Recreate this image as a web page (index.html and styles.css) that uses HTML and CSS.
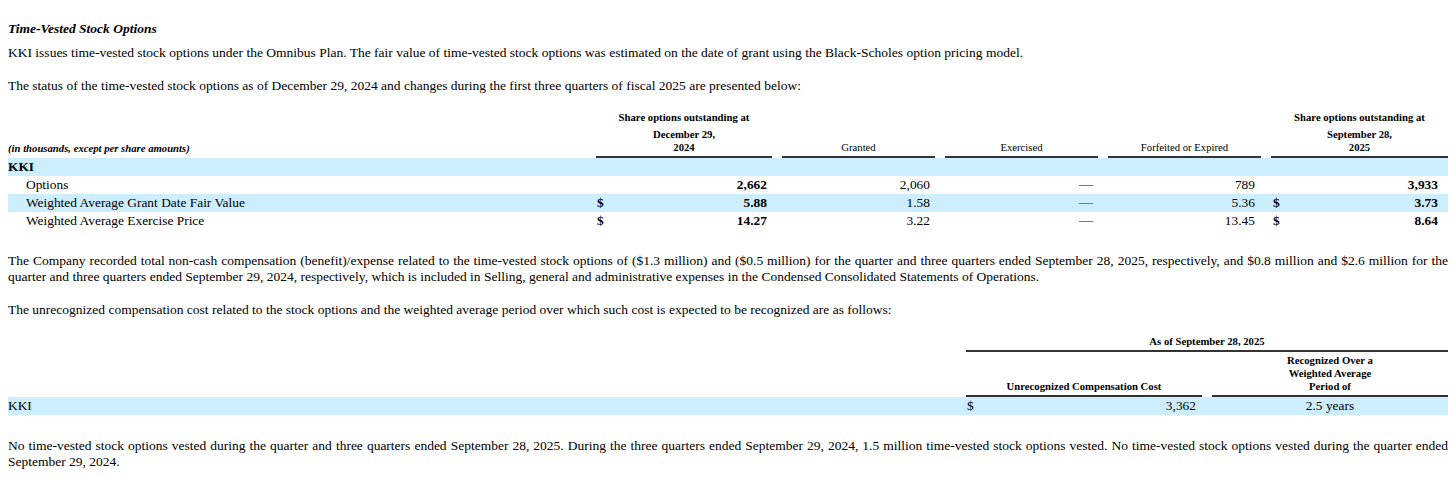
FILE: index.html
```html
<!DOCTYPE html>
<html>
<head>
<meta charset="utf-8">
<title>Time-Vested Stock Options</title>
<link rel="stylesheet" href="styles.css">
</head>
<body>
<div class="page">
  <h2 class="title">Time-Vested Stock Options</h2>
  <p class="para first">KKI issues time-vested stock options under the Omnibus Plan. The fair value of time-vested stock options was estimated on the date of grant using the Black-Scholes option pricing model.</p>
  <p class="para">The status of the time-vested stock options as of December 29, 2024 and changes during the first three quarters of fiscal 2025 are presented below:</p>

  <div class="tbl tbl-opts">
    <div class="row head">
      <div class="hcell note">(in thousands, except per share amounts)</div>
      <div class="hcell ul strong"><div class="h-top">Share options outstanding at</div><div>December 29,</div><div>2024</div></div>
      <div class="hcell ul">Granted</div>
      <div class="hcell ul">Exercised</div>
      <div class="hcell ul">Forfeited or Expired</div>
      <div class="hcell ul strong"><div class="h-top">Share options outstanding at</div><div>September 28,</div><div>2025</div></div>
    </div>
    <div class="row data band">
      <div class="cell lbl strong">KKI</div>
      <div class="cell"></div>
      <div class="cell"></div>
      <div class="cell"></div>
      <div class="cell"></div>
      <div class="cell"></div>
    </div>
    <div class="row data">
      <div class="cell lbl ind">Options</div>
      <div class="cell num c1 strong"><span></span><span>2,662</span></div>
      <div class="cell num">2,060</div>
      <div class="cell num dash">—</div>
      <div class="cell num c4">789</div>
      <div class="cell num c5 strong"><span></span><span>3,933</span></div>
    </div>
    <div class="row data band">
      <div class="cell lbl ind">Weighted Average Grant Date Fair Value</div>
      <div class="cell num c1 strong"><span class="cur">$</span><span>5.88</span></div>
      <div class="cell num">1.58</div>
      <div class="cell num dash">—</div>
      <div class="cell num c4">5.36</div>
      <div class="cell num c5 strong"><span class="cur">$</span><span>3.73</span></div>
    </div>
    <div class="row data">
      <div class="cell lbl ind">Weighted Average Exercise Price</div>
      <div class="cell num c1 strong"><span class="cur">$</span><span>14.27</span></div>
      <div class="cell num">3.22</div>
      <div class="cell num dash">—</div>
      <div class="cell num c4">13.45</div>
      <div class="cell num c5 strong"><span class="cur">$</span><span>8.64</span></div>
    </div>
  </div>

  <p class="para">The Company recorded total non-cash compensation (benefit)/expense related to the time-vested stock options of ($1.3 million) and ($0.5 million) for the quarter and three quarters ended September 28, 2025, respectively, and $0.8 million and $2.6 million for the quarter and three quarters ended September 29, 2024, respectively, which is included in Selling, general and administrative expenses in the Condensed Consolidated Statements of Operations.</p>
  <p class="para">The unrecognized compensation cost related to the stock options and the weighted average period over which such cost is expected to be recognized are as follows:</p>

  <div class="tbl tbl-comp">
    <div class="row head head-top">
      <div class="hcell"></div>
      <div class="hcell ul strong span2">As of September 28, 2025</div>
    </div>
    <div class="row head head-sub">
      <div class="hcell"></div>
      <div class="hcell ul strong">Unrecognized Compensation Cost</div>
      <div class="hcell ul strong"><div>Recognized Over a</div><div>Weighted Average</div><div>Period of</div></div>
    </div>
    <div class="row data band">
      <div class="cell lbl">KKI</div>
      <div class="cell num cc"><span class="cur">$</span><span>3,362</span></div>
      <div class="cell ctr">2.5 years</div>
    </div>
  </div>

  <p class="para last">No time-vested stock options vested during the quarter and three quarters ended September 28, 2025. During the three quarters ended September 29, 2024, 1.5 million time-vested stock options vested. No time-vested stock options vested during the quarter ended September 29, 2024.</p>
</div>
</body>
</html>
```

FILE: styles.css
```css
* {
  box-sizing: border-box;
}

html,
body {
  margin: 0;
  padding: 0;
  background: #ffffff;
}

body {
  font-family: "Liberation Serif", "Times New Roman", serif;
  color: #000000;
}

.page {
  width: 1456px;
  padding: 21px 8px 0;
}

.title {
  margin: 0;
  font-size: 13.5px;
  line-height: 16px;
  font-weight: bold;
  font-style: italic;
}

.para {
  margin: 17px 0 0;
  font-size: 13.5px;
  line-height: 16px;
  text-align: justify;
}

.para.first {
  margin-top: 8px;
}

.tbl {
  margin: 17px 0 23px;
  font-size: 13.4px;
}

.tbl + .para {
  margin-top: 23px;
}

.row {
  display: grid;
  column-gap: 10px;
}

.tbl-opts .row {
  grid-template-columns: 578px 176px 153px 153px 153px 177px;
}

.tbl-comp .row {
  grid-template-columns: 948px 236px 236px;
}

/* header cells */
.head {
  align-items: stretch;
  font-size: 10.7px;
  line-height: 13px;
}

.hcell {
  display: flex;
  flex-direction: column;
  justify-content: flex-end;
  align-items: center;
  text-align: center;
  padding-bottom: 2px;
}

.hcell.ul {
  border-bottom: 2px solid #333333;
}

.hcell.note {
  align-items: flex-start;
  text-align: left;
  font-weight: bold;
  font-style: italic;
  padding-bottom: 3px;
}

.h-top {
  margin-bottom: 4px;
}

.strong {
  font-weight: bold;
}

.span2 {
  grid-column: 2 / 4;
}

.head-sub {
  padding-top: 2px;
}

/* data rows */
.data {
  height: 18px;
  line-height: 18px;
}

.band {
  background: #cceeff;
}

.cell {
  white-space: nowrap;
}

.lbl {
  text-align: left;
}

.ind {
  padding-left: 18px;
}

.num {
  display: flex;
  justify-content: flex-end;
  padding-right: 5px;
}

.num.c1,
.num.c5,
.num.cc {
  justify-content: space-between;
}

.cur {
  padding-left: 1px;
}

.num.c4 {
  padding-right: 6px;
}

.num.c5 {
  padding-right: 10px;
  padding-left: 1px;
}

.num.cc {
  padding-right: 6px;
}

.dash {
  color: #7a7a7a;
  font-size: 14px;
  font-weight: bold;
}

.ctr {
  text-align: center;
}
```
